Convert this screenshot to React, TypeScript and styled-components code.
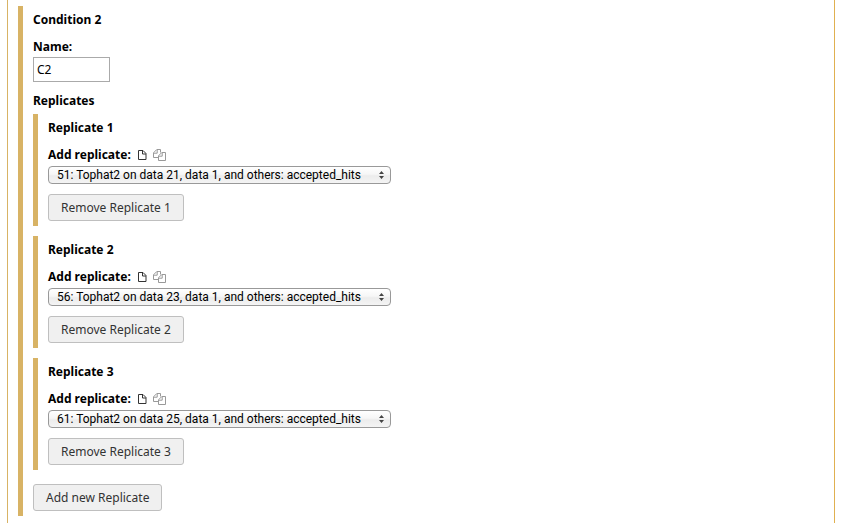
import React, { useState } from "react";
import styled, { createGlobalStyle } from "styled-components";

const GlobalStyle = createGlobalStyle`
  *, *::before, *::after { box-sizing: border-box; }
  body {
    margin: 0;
    background: #fff;
    color: #000;
    font-family: "Noto Sans", "Open Sans", sans-serif;
    font-size: 12px;
    line-height: 17px;
  }
`;

const Form = styled.form`
  margin: 0 9px 0 7px;
  padding: 6px 10px 7px;
  border: solid #e0b050;
  border-width: 0 1px;
  border-left-color: #d8b365;
`;

const Section = styled.section`
  display: flex;
  flex-direction: column;
  align-items: flex-start;
  gap: 10px;
  padding: 5px 0 5px 10px;
  border-left: 5px solid #d8b365;
`;

const Title = styled.h2`
  margin: 0;
  font-size: 12px;
  line-height: 17px;
  font-weight: 700;
`;

const Field = styled.div`
  display: flex;
  flex-direction: column;
  align-items: flex-start;
  gap: 2px;
`;

const LabelRow = styled.div`
  display: flex;
  align-items: center;
  gap: 6px;
  margin-bottom: 1px;
`;

const Label = styled.label`
  font-weight: 700;
`;

const TextInput = styled.input`
  width: 77px;
  height: 25px;
  padding: 0 3px;
  border: 1px solid #aaa;
  border-radius: 0;
  background: #fff;
  color: #000;
  font: inherit;
`;

const ModeButton = styled.button<{ $muted?: boolean }>`
  display: flex;
  padding: 0;
  border: 0;
  background: none;
  color: ${(p) => (p.$muted ? "#999" : "#333")};
`;

const SelectBox = styled.div`
  position: relative;
  width: 343px;
  max-width: 100%;
`;

const Select = styled.select`
  display: block;
  appearance: none;
  width: 100%;
  height: 18px;
  padding: 0 16px 0 8px;
  border: 1px solid #999;
  border-radius: 4px;
  background: linear-gradient(#fff 0%, #f6f6f6 45%, #ececec 55%, #f4f4f4 100%);
  color: #000;
  font-family: Roboto, "Noto Sans", sans-serif;
  font-size: 12px;
  line-height: 16px;
`;

const Arrows = styled.svg`
  position: absolute;
  top: 5px;
  right: 7px;
  pointer-events: none;
`;

const Button = styled.button`
  height: 27px;
  padding: 0 12px;
  border: 1px solid #bfbfbf;
  border-radius: 3px;
  background: #f0f0f0;
  color: #333;
  font: inherit;
  white-space: nowrap;
`;

const Replicates = styled.div`
  display: flex;
  flex-direction: column;
  align-self: stretch;
  gap: 5px;
`;

const List = styled.div`
  display: flex;
  flex-direction: column;
  gap: 10px;
  margin-bottom: 4px;
`;

const FileIcon = () => (
  <svg width="10" height="12" viewBox="0 0 10 12" fill="none" stroke="currentColor" aria-hidden="true">
    <path d="M1.5 1.5H6l3 3v6H1.5z" />
    <path d="M5.5 1.5v3.5H9" />
  </svg>
);

const FilesIcon = () => (
  <svg width="13" height="12" viewBox="0 0 13 12" fill="none" stroke="currentColor" aria-hidden="true">
    <path d="M5 8.5H.5V3.8L3.8.5h3.7v3" />
    <path d="M4.2.8v3.4H.8" />
    <path d="M5.5 11.5V6.8l3.3-3.3h3.7v8z" />
    <path d="M9.2 3.8v3.4H5.8" />
  </svg>
);

const datasets = [
  "51: Tophat2 on data 21, data 1, and others: accepted_hits",
  "56: Tophat2 on data 23, data 1, and others: accepted_hits",
  "61: Tophat2 on data 25, data 1, and others: accepted_hits",
];

function Replicate({ number, initial }: { number: number; initial: string }) {
  const [value, setValue] = useState(initial);
  const id = `replicate-${number}`;
  return (
    <Section>
      <Title as="h3">Replicate {number}</Title>
      <Field>
        <LabelRow>
          <Label htmlFor={id}>Add replicate:</Label>
          <ModeButton type="button" aria-label="Single dataset">
            <FileIcon />
          </ModeButton>
          <ModeButton type="button" $muted aria-label="Multiple datasets">
            <FilesIcon />
          </ModeButton>
        </LabelRow>
        <SelectBox>
          <Select id={id} value={value} onChange={(e) => setValue(e.target.value)}>
            {datasets.map((d) => (
              <option key={d}>{d}</option>
            ))}
          </Select>
          <Arrows width="5" height="8" viewBox="0 0 5 8" fill="#444" aria-hidden="true">
            <path d="M2.5 0 5 3H0zM0 5h5L2.5 8z" />
          </Arrows>
        </SelectBox>
      </Field>
      <Button type="button">Remove Replicate {number}</Button>
    </Section>
  );
}

export default function App() {
  const [name, setName] = useState("C2");
  return (
    <>
      <GlobalStyle />
      <Form>
        <Section>
          <Title>Condition 2</Title>
          <Field>
            <Label htmlFor="condition-name">Name:</Label>
            <TextInput id="condition-name" value={name} onChange={(e) => setName(e.target.value)} />
          </Field>
          <Replicates>
            <Title as="h3">Replicates</Title>
            <List>
              {datasets.map((d, i) => (
                <Replicate key={d} number={i + 1} initial={d} />
              ))}
            </List>
          </Replicates>
          <Button type="button">Add new Replicate</Button>
        </Section>
      </Form>
    </>
  );
}
